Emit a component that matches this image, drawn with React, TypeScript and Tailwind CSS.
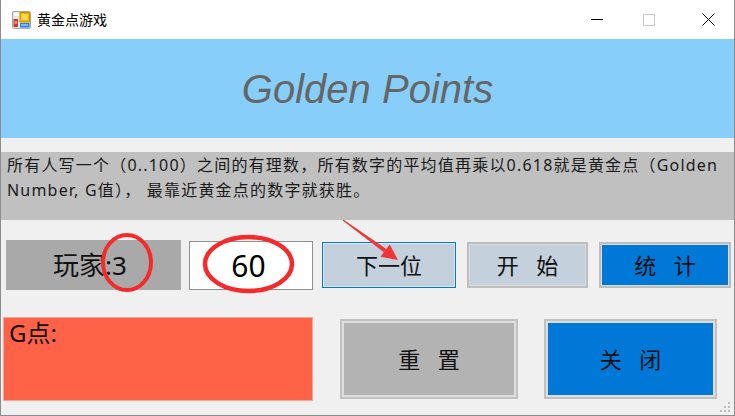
import React from "react";

const cjk = { fontFamily: '"Noto Sans", "Noto Sans CJK SC", sans-serif' };

function AppIcon() {
  return (
    <svg width="19" height="18" viewBox="0 0 19 18">
      <rect x="0.5" y="0.5" width="18" height="17" rx="1.5" fill="#e6e6e6" stroke="#a8a8a8" />
      <rect x="2" y="2" width="5" height="3" fill="#ffffff" />
      <rect x="8" y="1.5" width="9.5" height="9.5" fill="#f2b600" stroke="#c98f00" />
      <rect x="9.5" y="3" width="6.5" height="6" fill="#ffd94a" />
      <rect x="1.5" y="8" width="4.5" height="8" fill="#c83a2a" />
      <rect x="2.5" y="10" width="2.5" height="3" fill="#f08a7a" />
      <rect x="8" y="12" width="9.5" height="4.5" fill="#2f7fd6" />
      <rect x="9" y="13" width="7" height="2" fill="#7ab8ff" />
    </svg>
  );
}

export default function App() {
  return (
    <div className="relative w-[735px] h-[416px] overflow-hidden bg-[#f0f0f0] flex flex-col border-l border-r border-b border-[#8c8c8c]" style={cjk}>
      {/* Title bar */}
      <div className="h-[39px] bg-white flex items-center shrink-0">
        <div className="ml-[11px] mt-[1px] flex items-center">
          <AppIcon />
        </div>
        <div className="ml-[6px] text-[14px] text-black leading-none">黄金点游戏</div>
        <div className="ml-auto flex items-center h-full">
          <div className="w-[46px] h-full flex items-center justify-center">
            <div className="w-[12px] h-px bg-black" />
          </div>
          <div className="w-[58px] h-full flex items-center justify-center">
            <div className="w-[12px] h-[12px] border border-[#c8c8c8]" />
          </div>
          <div className="w-[60px] h-full flex items-center justify-center mr-[-4px]">
            <svg width="13" height="13" viewBox="0 0 13 13">
              <path d="M0.5 0.5 L12.5 12.5 M12.5 0.5 L0.5 12.5" stroke="#000" strokeWidth="1" />
            </svg>
          </div>
        </div>
      </div>

      {/* Banner */}
      <div className="h-[99px] bg-[#87cefa] flex items-center justify-center shrink-0">
        <span
          className="italic text-[40px] text-[#666666] leading-none"
          style={{ fontFamily: '"Liberation Sans", Arial, sans-serif' }}
        >
          Golden Points
        </span>
      </div>

      {/* Description */}
      <div className="mt-[14px] h-[68px] bg-[#c0c0c0] shrink-0 pl-[6px] pt-[1px] text-[16px] leading-[25px] tracking-[1.2px] text-[#1a1a1a] whitespace-nowrap">
        所有人写一个（0..100）之间的有理数，所有数字的平均值再乘以0.618就是黄金点（Golden
        <br />
        Number, G值）， 最靠近黄金点的数字就获胜。
      </div>

      {/* Row 2 */}
      <div className="mt-[20px] h-[50px] flex items-center shrink-0">
        <div className="ml-[5px] w-[175px] h-[50px] bg-[#a9a9a9] flex items-center justify-center text-[26px] text-[#111]">
          <span className="mr-[7px]">玩家:3</span>
        </div>
        <div className="ml-[8px] w-[124px] h-[49px] bg-white border border-[#8f8f8f] flex items-center justify-center text-[30px] text-black">
          <span className="mr-[5px]">60</span>
        </div>
        <div className="ml-[9px] w-[134px] h-[46px] bg-[#c4d0dc] border border-[#0078d7] shadow-[inset_0_0_0_1px_#dfe8f1] flex items-center justify-center text-[22px] text-[#111]">
          下一位
        </div>
        <div className="ml-[11px] w-[121px] h-[46px] bg-[#c4d0dc] border-2 border-[#bdbdbd] shadow-[inset_0_0_0_1px_#dcdcdc] flex items-center justify-center text-[22px] text-[#111] [word-spacing:12px]">
          开 始
        </div>
        <div className="ml-[11px] w-[132px] h-[46px] bg-[#0078d7] border-2 border-[#bdbdbd] shadow-[inset_0_0_0_1px_#dcdcdc] flex items-center justify-center text-[22px] text-[#111] [word-spacing:12px]">
          统 计
        </div>
      </div>

      {/* Row 3 */}
      <div className="mt-[27px] h-[84px] flex items-center shrink-0">
        <div className="ml-[2px] w-[310px] h-[84px] bg-[#ff6347] border border-[#f6a597] pl-[5px] pt-[1px] text-[24px] text-[#111] leading-[28px]">
          G点:
        </div>
        <div className="ml-[27px] w-[178px] h-[80px] bg-[#b3b3b3] border-2 border-[#c2c2c2] shadow-[inset_0_0_0_2px_#dedede] flex items-center justify-center text-[22px] text-[#111] [word-spacing:12px]">
          重 置
        </div>
        <div className="ml-[26px] w-[173px] h-[80px] bg-[#0078d7] border-2 border-[#c2c2c2] shadow-[inset_0_0_0_2px_#dedede] flex items-center justify-center text-[22px] text-[#111] [word-spacing:12px]">
          关 闭
        </div>
      </div>

      {/* Overlay annotations */}
      <svg className="absolute left-0 top-0 pointer-events-none" width="735" height="416" viewBox="0 0 735 416">
        <ellipse cx="126" cy="262.5" rx="24" ry="27.5" fill="none" stroke="#f52a2a" strokeWidth="4" />
        <ellipse cx="247.5" cy="264" rx="43.5" ry="27" fill="none" stroke="#f52a2a" strokeWidth="4.5" />
        <polygon points="341.7,220.4 342.3,219.6 385.3,249 382.9,252.2" fill="#ef3535" />
        <polygon points="397,260 379.5,256.8 388.7,244.4" fill="#ef3535" />
        {/* resize grip */}
        <g fill="#bdbdbd">
          <rect x="727" y="402" width="2" height="2" />
          <rect x="723" y="406" width="2" height="2" />
          <rect x="727" y="406" width="2" height="2" />
          <rect x="719" y="410" width="2" height="2" />
          <rect x="723" y="410" width="2" height="2" />
          <rect x="727" y="410" width="2" height="2" />
        </g>
      </svg>
    </div>
  );
}
